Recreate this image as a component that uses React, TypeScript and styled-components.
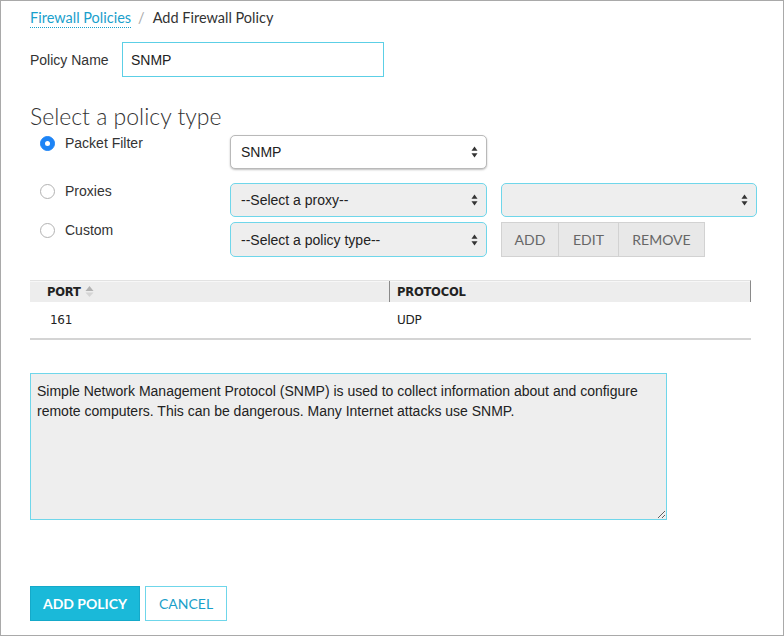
import React from "react";
import styled, { createGlobalStyle } from "styled-components";

const Global = createGlobalStyle`
  html, body { margin: 0; padding: 0; background: #fff; }
  body { font-family: "Liberation Sans", Arial, sans-serif; }
`;

const Frame = styled.div`
  width: 784px;
  height: 636px;
  box-sizing: border-box;
  border: 1px solid #a9a9a9;
  padding: 5px 24px 0 29px;
  display: flex;
  flex-direction: column;
`;

const Breadcrumb = styled.div`
  display: flex;
  align-items: center;
  height: 22px;
  font-family: Lato, "Open Sans", sans-serif;
  font-size: 14.5px;
  color: #333;
`;

const CrumbLink = styled.a`
  color: #1aa0cc;
  text-decoration: none;
  border-bottom: 1px dotted #1aa0cc;
  line-height: 19px;
  padding-top: 2px;
`;

const Sep = styled.span`
  color: #aaa;
  margin: 0 8px 0 7px;
`;

const NameRow = styled.div`
  display: flex;
  align-items: center;
  margin-top: 14px;
`;

const FieldLabel = styled.label`
  font-size: 14px;
  color: #333;
  width: 92px;
`;

const TextInput = styled.input`
  width: 262px;
  height: 35px;
  box-sizing: border-box;
  border: 1px solid #5ccfe6;
  padding: 0 8px;
  font-family: "Liberation Sans", Arial, sans-serif;
  font-size: 14px;
  color: #222;
  outline: none;
`;

const Heading = styled.h2`
  margin: 26px 0 0 0;
  font-family: Lato, sans-serif;
  font-weight: 300;
  font-size: 23px;
  line-height: 26px;
  color: #333;
`;

const TypeRow = styled.div<{ $mt: number }>`
  display: flex;
  align-items: flex-start;
  margin-top: ${(p) => p.$mt}px;
`;

const RadioCell = styled.div`
  display: flex;
  flex: none;
  align-items: center;
  width: 190px;
  height: 16px;
  padding-left: 10px;
  gap: 10px;
  font-size: 14px;
  color: #333;
`;

const Radio = styled.span<{ $on?: boolean }>`
  width: 15px;
  height: 15px;
  box-sizing: border-box;
  border-radius: 50%;
  flex: none;
  background: ${(p) => (p.$on ? "#1d84f6" : "#fff")};
  border: 1px solid ${(p) => (p.$on ? "#1d84f6" : "#b2b2b2")};
  display: flex;
  align-items: center;
  justify-content: center;
  &::after {
    content: "";
    display: ${(p) => (p.$on ? "block" : "none")};
    width: 5px;
    height: 5px;
    border-radius: 50%;
    background: #fff;
  }
`;

const SelectBox = styled.div<{ $plain?: boolean; $w: number; $h: number }>`
  width: ${(p) => p.$w}px;
  height: ${(p) => p.$h}px;
  flex: none;
  box-sizing: border-box;
  border-radius: 5px;
  border: 1px solid ${(p) => (p.$plain ? "#b9b9b9" : "#6fd6ea")};
  background: ${(p) => (p.$plain ? "#fff" : "#eeeeee")};
  box-shadow: ${(p) => (p.$plain ? "0 1px 2px rgba(0,0,0,0.25)" : "none")};
  display: flex;
  align-items: center;
  justify-content: space-between;
  padding: 0 8px 0 10px;
  font-size: 14px;
  color: #222;
`;

const SideSlot = styled.div`
  margin-left: 14px;
  flex: none;
  display: flex;
`;

const Arrows = () => (
  <svg width="7" height="12" viewBox="0 0 7 12">
    <path d="M3.5 0.5 L6.5 4.8 L0.5 4.8 Z" fill="#333" />
    <path d="M3.5 11.5 L6.5 7.2 L0.5 7.2 Z" fill="#333" />
  </svg>
);

const GroupBtn = styled.button<{ $w: number }>`
  width: ${(p) => p.$w}px;
  height: 35px;
  box-sizing: border-box;
  border: 1px solid #d2d2d2;
  margin-left: -1px;
  &:first-child { margin-left: 0; }
  background: #e8e8e8;
  color: #666;
  font-family: Lato, sans-serif;
  font-size: 14px;
  padding: 0;
`;

const Table = styled.div`
  margin-top: 23px;
  width: 721px;
`;

const HeadRow = styled.div`
  display: grid;
  grid-template-columns: 359px 1fr;
  height: 22px;
  background: #ededed;
  border-top: 1px solid #e2e2e2;
  box-shadow: inset 0 1px 0 #f7f7f7;
  border-right: 1px solid #8a8a8a;
  box-sizing: border-box;
`;

const HeadCell = styled.div<{ $divider?: boolean }>`
  display: flex;
  align-items: center;
  gap: 4px;
  padding-left: ${(p) => (p.$divider ? 7 : 17)}px;
  border-left: ${(p) => (p.$divider ? "1px solid #8a8a8a" : "none")};
  font-family: "DejaVu Sans", Verdana, sans-serif;
  font-weight: bold;
  font-size: 11.5px;
  letter-spacing: -0.2px;
  color: #222;
`;

const SortIcon = () => (
  <svg width="9" height="13" viewBox="0 0 9 13">
    <path d="M4.5 1 L8.5 6 L0.5 6 Z" fill="#b3b3b3" />
    <path d="M4.5 12 L8.5 7.5 L0.5 7.5 Z" fill="#d5d5d5" />
  </svg>
);

const BodyRow = styled.div`
  display: grid;
  grid-template-columns: 360px 1fr;
  height: 38px;
  border-bottom: 2px solid #d4d4d4;
  box-sizing: border-box;
  align-items: center;
  font-family: "DejaVu Sans", Verdana, sans-serif;
  font-size: 12px;
  letter-spacing: -0.3px;
  color: #222;
`;

const BodyCell = styled.div<{ $pl: number }>`
  padding-left: ${(p) => p.$pl}px;
`;

const Desc = styled.textarea`
  margin-top: 33px;
  width: 637px;
  height: 147px;
  box-sizing: border-box;
  border: 1px solid #6fd6ea;
  background: #eeeeee;
  padding: 7px 6px;
  font-family: "Liberation Sans", Arial, sans-serif;
  font-size: 14px;
  line-height: 20px;
  color: #222;
  resize: both;
  outline: none;
`;

const Footer = styled.div`
  display: flex;
  gap: 5px;
  margin-top: 66px;
`;

const FooterBtn = styled.button<{ $primary?: boolean; $w: number }>`
  width: ${(p) => p.$w}px;
  height: 35px;
  box-sizing: border-box;
  border: 1px solid ${(p) => (p.$primary ? "#15a9c9" : "#6fd6ea")};
  background: ${(p) => (p.$primary ? "#1ab9d9" : "#fff")};
  color: ${(p) => (p.$primary ? "#fff" : "#1a9fc9")};
  font-family: Lato, sans-serif;
  font-weight: ${(p) => (p.$primary ? 700 : 400)};
  font-size: 14px;
  padding: 0;
`;

export default function App() {
  return (
    <>
      <Global />
      <Frame>
        <Breadcrumb>
          <CrumbLink href="#">Firewall Policies</CrumbLink>
          <Sep>/</Sep>
          <span>Add Firewall Policy</span>
        </Breadcrumb>
        <NameRow>
          <FieldLabel>Policy Name</FieldLabel>
          <TextInput defaultValue="SNMP" />
        </NameRow>
        <Heading>Select a policy type</Heading>
        <TypeRow $mt={6}>
          <RadioCell>
            <Radio $on />
            Packet Filter
          </RadioCell>
          <SelectBox $plain $w={257} $h={34}>
            SNMP
            <Arrows />
          </SelectBox>
        </TypeRow>
        <TypeRow $mt={14}>
          <RadioCell>
            <Radio />
            Proxies
          </RadioCell>
          <SelectBox $w={257} $h={34}>
            --Select a proxy--
            <Arrows />
          </SelectBox>
          <SideSlot>
            <SelectBox $w={256} $h={34}>
              <span />
              <Arrows />
            </SelectBox>
          </SideSlot>
        </TypeRow>
        <TypeRow $mt={5}>
          <RadioCell>
            <Radio />
            Custom
          </RadioCell>
          <SelectBox $w={257} $h={35}>
            --Select a policy type--
            <Arrows />
          </SelectBox>
          <SideSlot>
            <GroupBtn $w={58}>ADD</GroupBtn>
            <GroupBtn $w={61}>EDIT</GroupBtn>
            <GroupBtn $w={87}>REMOVE</GroupBtn>
          </SideSlot>
        </TypeRow>
        <Table>
          <HeadRow>
            <HeadCell>
              PORT
              <SortIcon />
            </HeadCell>
            <HeadCell $divider>PROTOCOL</HeadCell>
          </HeadRow>
          <BodyRow>
            <BodyCell $pl={20}>161</BodyCell>
            <BodyCell $pl={7}>UDP</BodyCell>
          </BodyRow>
        </Table>
        <Desc defaultValue="Simple Network Management Protocol (SNMP) is used to collect information about and configure remote computers. This can be dangerous. Many Internet attacks use SNMP." />
        <Footer>
          <FooterBtn $primary $w={110}>ADD POLICY</FooterBtn>
          <FooterBtn $w={82}>CANCEL</FooterBtn>
        </Footer>
      </Frame>
    </>
  );
}
